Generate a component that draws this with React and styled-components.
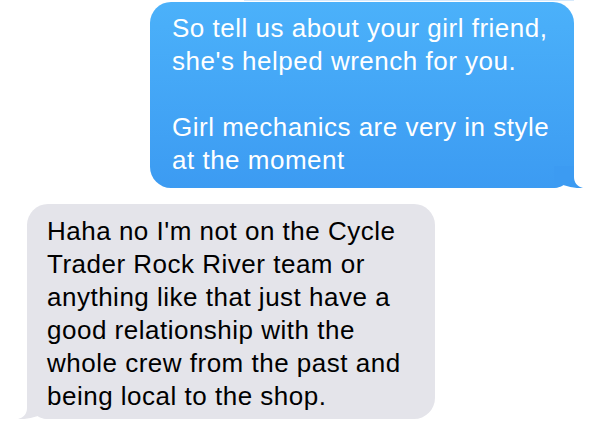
import React from 'react';
import styled, { createGlobalStyle } from 'styled-components';

const GlobalStyle = createGlobalStyle`
    html, body {
        margin: 0;
        padding: 0;
        background: #ffffff;
    }
    body {
        width: 600px;
        height: 425px;
        overflow: hidden;
        font-family: "Liberation Sans", Arial, sans-serif;
    }
`;

const Thread = styled.div`
    display: flex;
    flex-direction: column;
    width: 600px;
`;

// bottom edge of the message that scrolled off the top
const PrevEdge = styled.div`
    align-self: flex-end;
    width: 330px;
    height: 1px;
    margin-right: 26px;
    background: #d6e9fb;
`;

const Row = styled.div`
    display: flex;
    justify-content: ${props => props.outgoing ? 'flex-end' : 'flex-start'};
    margin-top: ${props => props.gap}px;
    padding: ${props => props.outgoing ? '0 26px 0 0' : '0 0 0 27px'};
`;

const Bubble = styled.div`
    position: relative;
    box-sizing: border-box;
    width: ${props => props.width}px;
    border-radius: 21px;
    font-size: 26px;
    line-height: 33px;
    letter-spacing: 0.5px;
    white-space: pre-line;
    ${props => props.outgoing ? `
        padding: 10px 10px 11px 22px;
        background: linear-gradient(to bottom, #4bb1fa, #3c9bf2);
        color: #ffffff;
    ` : `
        padding: 11px 8px 6px 20px;
        background: #e4e4ea;
        color: #000000;
    `}
`;

const TailSvg = styled.svg`
    position: absolute;
    bottom: 0;
    width: 30px;
    height: 22px;
    ${props => props.outgoing ? `
        right: -10px;
    ` : `
        left: -10px;
        transform: scaleX(-1);
    `}
`;

const Tail = ({ outgoing, color }) => (
    <TailSvg outgoing={outgoing} viewBox="0 0 30 22">
        <path
            d="M20 0 L20 11 C20 16.5 23 20.5 29 22 C24 22.6 17 21.5 9 19 C6 20.2 3 21.4 0 22 L0 0 Z"
            fill={color}
        />
    </TailSvg>
);

const messages = [
    {
        outgoing: true,
        width: 424,
        gap: 1,
        text: "So tell us about your girl friend,\nshe's helped wrench for you.\n\u00a0\nGirl mechanics are very in style\nat the moment",
    },
    {
        outgoing: false,
        width: 408,
        gap: 16,
        text: "Haha no I'm not on the Cycle\nTrader Rock River team or\nanything like that just have a\ngood relationship with the\nwhole crew from the past and\nbeing local to the shop.",
    },
];

const App = () => (
    <>
        <GlobalStyle />
        <Thread>
            <PrevEdge />
            {messages.map((m, i) => (
                <Row key={i} outgoing={m.outgoing} gap={m.gap}>
                    <Bubble outgoing={m.outgoing} width={m.width}>
                        {m.text}
                        <Tail outgoing={m.outgoing} color={m.outgoing ? '#3c9bf2' : '#e4e4ea'} />
                    </Bubble>
                </Row>
            ))}
        </Thread>
    </>
);

export default App;
